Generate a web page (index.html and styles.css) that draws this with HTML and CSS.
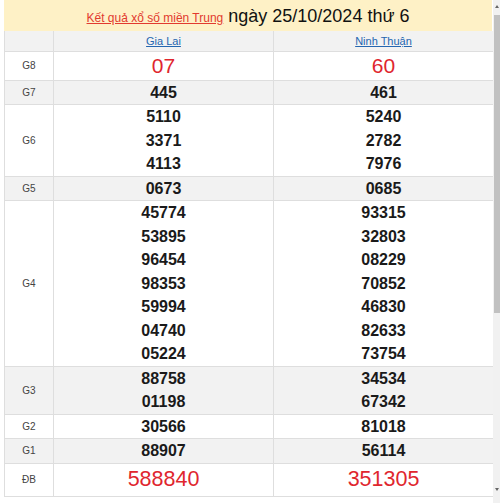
FILE: index.html
```html
<!DOCTYPE html>
<html lang="vi">
<head>
<meta charset="utf-8">
<title>Kết quả xổ số miền Trung</title>
<link rel="stylesheet" href="styles.css">
</head>
<body>
<div class="frame">
  <div class="content">
    <div class="title">
      <a class="title-link" href="#">Kết quả xổ số miền Trung</a>
      <span class="title-date">ngày 25/10/2024 thứ 6</span>
    </div>
    <table class="kq">
      <colgroup>
        <col class="c-label"><col class="c-prov"><col class="c-prov">
      </colgroup>
      <tr class="head gray">
        <td></td>
        <td><a href="#">Gia Lai</a></td>
        <td><a href="#">Ninh Thuận</a></td>
      </tr>
      <tr class="g8">
        <td class="lbl">G8</td>
        <td class="red big">07</td>
        <td class="red big">60</td>
      </tr>
      <tr class="gray">
        <td class="lbl">G7</td>
        <td class="num"><div>445</div></td>
        <td class="num"><div>461</div></td>
      </tr>
      <tr>
        <td class="lbl">G6</td>
        <td class="num"><div>5110</div><div>3371</div><div>4113</div></td>
        <td class="num"><div>5240</div><div>2782</div><div>7976</div></td>
      </tr>
      <tr class="gray">
        <td class="lbl">G5</td>
        <td class="num"><div>0673</div></td>
        <td class="num"><div>0685</div></td>
      </tr>
      <tr>
        <td class="lbl">G4</td>
        <td class="num"><div>45774</div><div>53895</div><div>96454</div><div>98353</div><div>59994</div><div>04740</div><div>05224</div></td>
        <td class="num"><div>93315</div><div>32803</div><div>08229</div><div>70852</div><div>46830</div><div>82633</div><div>73754</div></td>
      </tr>
      <tr class="gray">
        <td class="lbl">G3</td>
        <td class="num"><div>88758</div><div>01198</div></td>
        <td class="num"><div>34534</div><div>67342</div></td>
      </tr>
      <tr>
        <td class="lbl">G2</td>
        <td class="num"><div>30566</div></td>
        <td class="num"><div>81018</div></td>
      </tr>
      <tr class="gray">
        <td class="lbl">G1</td>
        <td class="num"><div>88907</div></td>
        <td class="num"><div>56114</div></td>
      </tr>
      <tr class="db">
        <td class="lbl">ĐB</td>
        <td class="red big">588840</td>
        <td class="red big">351305</td>
      </tr>
    </table>
  </div>
  <div class="scrollbar">
    <span class="arrow up"></span>
    <div class="thumb"></div>
    <span class="arrow down"></span>
  </div>
</div>
</body>
</html>
```

FILE: styles.css
```css
* { box-sizing: border-box; }
html, body {
  margin: 0;
  padding: 0;
  background: #fff;
  font-family: "Liberation Sans", Arial, sans-serif;
}
.frame {
  display: flex;
  width: 500px;
  height: 503px;
  overflow: hidden;
}
.content {
  width: 493px;
  padding-left: 4px;
  padding-right: 1px;
}
.title {
  height: 31px;
  background: #fef1c6;
  display: flex;
  align-items: center;
  justify-content: center;
  gap: 5px;
  padding-top: 2px;
}
.title-link {
  color: #e23a2f;
  font-size: 12px;
  text-decoration: underline;
  position: relative;
  top: 1px;
}
.title-date {
  color: #111;
  font-size: 18px;
}
.kq {
  width: 488px;
  border-collapse: collapse;
  table-layout: fixed;
}
.c-label { width: 49px; }
.c-prov { width: 220px; }
.kq td {
  border: 1px solid #dedede;
  padding: 0;
  text-align: center;
  vertical-align: middle;
}
.kq tr:first-child td { border-top: none; }
.gray td { background: #f2f2f2; }
.head td { height: 20px; font-size: 11px; }
.head a { color: #2566b0; text-decoration: underline; }
.lbl {
  font-size: 10px;
  color: #444;
}
.num {
  font-size: 16px;
  font-weight: bold;
  color: #1a1a1a;
}
.num div {
  line-height: 23.5px;
  height: 23.5px;
}
.red { color: #e0262e; }
.big { font-size: 21px; }
.g8 td { height: 29px; }
.db td { height: 33px; }
.db .big { font-size: 21.5px; }
.scrollbar {
  width: 7px;
  height: 503px;
  background: #f1f1f1;
  display: flex;
  flex-direction: column;
  align-items: center;
  padding-top: 5px;
}
.thumb {
  width: 6px;
  margin-top: 7px;
  margin-left: 1px;
  height: 298px;
  background: #c1c1c1;
}
.arrow {
  width: 0;
  height: 0;
  border-left: 2px solid transparent;
  border-right: 2px solid transparent;
}
.arrow.up { border-bottom: 3px solid #666; }
.arrow.down {
  border-top: 3px solid #666;
  margin-top: 175px;
}
```
